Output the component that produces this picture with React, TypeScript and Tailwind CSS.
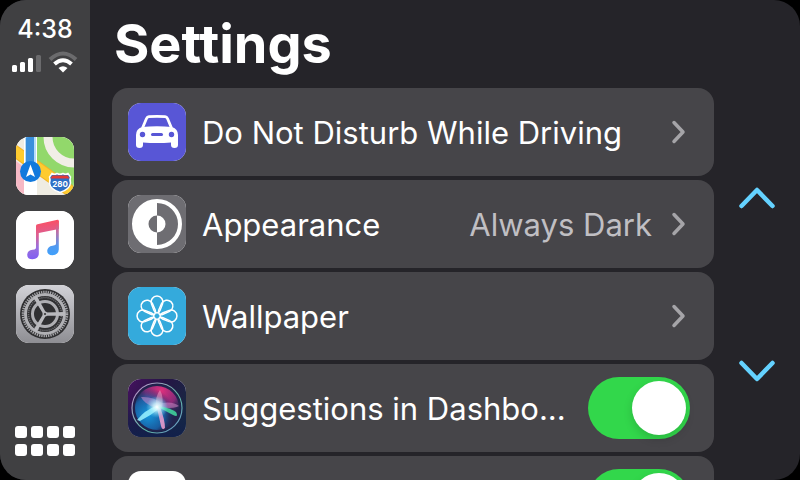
import type { ReactNode } from "react";

const SPOKES = [0, 45, 90, 135, 180, 225, 270, 315];

function MapsIcon() {
  return (
    <svg viewBox="0 0 58 58" className="size-full" aria-hidden="true">
      <rect width="58" height="58" fill="#efece2" />
      <path d="M20 0H58V56L20 28Z" fill="#92d86b" />
      <circle cx="58" cy="0" r="26" fill="none" stroke="#f1eee6" strokeWidth="9" />
      <path d="M0 24L9 31V58H0Z" fill="#f6b9c5" />
      <path d="M-4 12L64 61" stroke="#f3b326" strokeWidth="12" />
      <path d="M-4 12L64 61" stroke="#fecb2f" strokeWidth="10" />
      <rect x="8" width="13" height="58" fill="#fff" />
      <rect x="9" width="11" height="34" fill="#b8dcf8" />
      <rect x="10" width="8" height="34" fill="#3a8fdc" />
      <circle cx="14.5" cy="34.5" r="10.5" fill="#1279dd" />
      <path d="M14.5 27.5L19 40L14.5 37.5L10 40Z" fill="#fff" />
      <path
        d="M36 36.5Q38.5 38 41 36.5Q44 38 47 36.5Q49.5 38 52 36.5L54.5 40Q53.5 42 54.5 46Q54 52 44 55.5Q34 52 33.5 46Q34.5 42 33.5 40Z"
        fill="#2d6fc5"
        stroke="#fff"
        strokeWidth="1.5"
      />
      <path d="M35 40.5L36.5 38.5H51.5L53 40.5V41.5H35Z" fill="#e23b37" />
      <text x="44" y="50" textAnchor="middle" fontFamily="Inter, sans-serif" fontSize="8" fontWeight="700" fill="#fff">
        280
      </text>
    </svg>
  );
}

function MusicIcon() {
  return (
    <svg viewBox="0 0 58 58" className="size-full" aria-hidden="true">
      <defs>
        <linearGradient id="note" gradientUnits="userSpaceOnUse" x1="27" y1="10" x2="32" y2="48">
          <stop offset="0" stopColor="#fb4f63" />
          <stop offset="0.35" stopColor="#dc5f92" />
          <stop offset="0.65" stopColor="#9a70dd" />
          <stop offset="1" stopColor="#7d5cf5" />
        </linearGradient>
        <linearGradient id="noteRight" gradientUnits="userSpaceOnUse" x1="40" y1="10" x2="38" y2="44">
          <stop offset="0" stopColor="#fb4f63" />
          <stop offset="0.35" stopColor="#b573ae" />
          <stop offset="0.75" stopColor="#4f9af2" />
          <stop offset="1" stopColor="#3fa0fb" />
        </linearGradient>
      </defs>
      <rect width="58" height="58" fill="#fff" />
      <path
        d="M20 15Q20 13.5 21.5 13.2L41.5 8.8Q42.8 8.6 42.8 10V18L22.8 22V43Q22.5 48 16.5 48.3Q11.2 48.3 11.2 43.8Q11.5 39.5 16.5 38.8L18.5 38.4Q20 38 20 36.5Z"
        fill="url(#note)"
      />
      <path
        d="M42.8 10V38.5Q42.5 43.8 36.5 44.2Q31.2 44.2 31.2 39.8Q31.5 35.5 36.5 34.7L38.5 34.3Q40 34 40 32.5V10Z"
        fill="url(#noteRight)"
      />
    </svg>
  );
}

function GearIcon() {
  return (
    <svg viewBox="0 0 58 58" className="size-full" aria-hidden="true">
      <defs>
        <linearGradient id="metal" x1="0" y1="0" x2="0" y2="1">
          <stop offset="0" stopColor="#d2d2d7" />
          <stop offset="1" stopColor="#8e8e93" />
        </linearGradient>
      </defs>
      <rect width="58" height="58" fill="url(#metal)" />
      <circle cx="29" cy="29" r="25" fill="#2f2f31" />
      <circle cx="29" cy="29" r="22" fill="none" stroke="#a9a9ad" strokeWidth="2.5" strokeDasharray="1.3 1" />
      <circle cx="29" cy="29" r="19.5" fill="none" stroke="#b0b0b4" strokeWidth="3" />
      <circle cx="29" cy="29" r="16.5" fill="none" stroke="#6c6c70" strokeWidth="1.5" strokeDasharray="1.2 0.9" />
      <circle cx="29" cy="29" r="12.5" fill="none" stroke="#aeaeb2" strokeWidth="3" />
      <path d="M29 27.5L49 27V31L29 30.5ZM30.3 28.2L20.7 10.7L17.3 12.7L27.7 29.8ZM30.3 29.8L20.7 47.3L17.3 45.3L27.7 28.2Z" fill="#b9b9bd" />
      <circle cx="29" cy="29" r="2.5" fill="#b5b5b9" />
      <circle cx="29" cy="29" r="1" fill="#2f2f31" />
    </svg>
  );
}

function CarIcon() {
  return (
    <svg viewBox="0 0 58 58" className="size-full" aria-hidden="true">
      <rect width="58" height="58" fill="#5856d6" />
      <path d="M14.5 25L18.5 15.5Q19.3 13.8 21 13.6Q29 13 37 13.6Q38.7 13.8 39.5 15.5L43.5 25" fill="none" stroke="#fff" strokeWidth="2.8" />
      <path
        d="M14 24Q29 22.6 44 24Q50 26 50 32V42Q50 45 46.5 45Q43 45 43 42V39.5Q29 40.5 15 39.5V42Q15 45 11.5 45Q8 45 8 42V32Q8 26 14 24Z"
        fill="#fff"
      />
      <circle cx="14.5" cy="31.5" r="2.7" fill="#5856d6" />
      <circle cx="43.5" cy="31.5" r="2.7" fill="#5856d6" />
      <path d="M24.5 31.5H33.5" stroke="#5856d6" strokeWidth="3" strokeLinecap="round" />
    </svg>
  );
}

function AppearanceIcon() {
  return (
    <svg viewBox="0 0 58 58" className="size-full" aria-hidden="true">
      <rect width="58" height="58" fill="#6e6d72" />
      <circle cx="29" cy="29" r="23" fill="none" stroke="#fff" strokeWidth="4" />
      <path d="M29 5A24 24 0 0 0 29 53V37.5A8.5 8.5 0 0 1 29 20.5Z" fill="#fff" />
      <path d="M29 20.5A8.5 8.5 0 0 1 29 37.5Z" fill="#fff" />
    </svg>
  );
}

function WallpaperIcon() {
  return (
    <svg viewBox="0 0 58 58" className="size-full" aria-hidden="true">
      <rect width="58" height="58" fill="#34aadc" />
      {SPOKES.map((angle) => (
        <path
          key={angle}
          d="M29 26Q27 26 26 23.5L23.4 16.8A5.9 5.9 0 1 1 34.6 16.8L32 23.5Q31 26 29 26Z"
          transform={`rotate(${angle} 29 29)`}
          fill="none"
          stroke="#fff"
          strokeWidth="1.5"
          strokeLinejoin="round"
        />
      ))}
    </svg>
  );
}

function SiriIcon() {
  return (
    <svg viewBox="0 0 58 58" className="size-full" aria-hidden="true">
      <defs>
        <linearGradient id="siriBack" x1="0" y1="0" x2="1" y2="0.6">
          <stop offset="0" stopColor="#45125f" />
          <stop offset="0.5" stopColor="#251545" />
          <stop offset="1" stopColor="#172b43" />
        </linearGradient>
        <linearGradient id="siriBase" x1="0" y1="0" x2="0" y2="1">
          <stop offset="0.4" stopColor="#12204b" stopOpacity="0" />
          <stop offset="1" stopColor="#12204b" />
        </linearGradient>
        <radialGradient id="siriPink" cx="0.6" cy="0.1" r="0.6">
          <stop offset="0" stopColor="#e0307d" />
          <stop offset="0.6" stopColor="#a32c83" stopOpacity="0.8" />
          <stop offset="1" stopColor="#43316f" stopOpacity="0" />
        </radialGradient>
        <radialGradient id="siriBlue" cx="0.3" cy="0.65" r="0.6">
          <stop offset="0" stopColor="#159be0" />
          <stop offset="0.6" stopColor="#176bb5" stopOpacity="0.8" />
          <stop offset="1" stopColor="#1d2b61" stopOpacity="0" />
        </radialGradient>
        <linearGradient id="siriRim" x1="0" y1="0" x2="1" y2="1">
          <stop offset="0" stopColor="#c391cf" />
          <stop offset="0.6" stopColor="#5fb7a2" />
          <stop offset="1" stopColor="#6d8cc8" />
        </linearGradient>
        <radialGradient id="siriGlow">
          <stop offset="0" stopColor="#fff" />
          <stop offset="0.35" stopColor="#cbf9ff" stopOpacity="0.8" />
          <stop offset="1" stopColor="#6be2ff" stopOpacity="0" />
        </radialGradient>
      </defs>
      <rect width="58" height="58" fill="url(#siriBack)" />
      <rect width="58" height="58" fill="url(#siriBase)" />
      <circle cx="29" cy="29" r="24" fill="#21244d" />
      <circle cx="29" cy="29" r="22" fill="url(#siriPink)" />
      <circle cx="29" cy="29" r="22" fill="url(#siriBlue)" />
      <path d="M28 29Q16 25 13 18Q24 17 34 24Q45 22 51 27Q46 30 28 29Z" fill="#d98fd0" opacity="0.5" />
      <path d="M28 29Q27 17 32 11Q36 18 34 29Z" fill="#f09cc5" opacity="0.55" />
      <path d="M28 27Q17 31 9 41L12 42Q22 37 32 29Z" fill="#9bf3ff" opacity="0.85" />
      <path d="M29 29L33 47Q34 52 37 49Q37 41 32 28Z" fill="#f5a0cf" opacity="0.85" />
      <path d="M30 28L45 36Q51 39 48 33Q43 29 30 27Z" fill="#42dba0" opacity="0.85" />
      <circle cx="29" cy="28" r="11" fill="url(#siriGlow)" />
      <circle cx="29" cy="29" r="25" fill="none" stroke="url(#siriRim)" strokeWidth="1.2" />
    </svg>
  );
}

function SignalIcon() {
  return (
    <svg viewBox="0 0 30 20" className="h-5 w-[30px]" aria-hidden="true">
      <rect x="0" y="12" width="5" height="7" rx="1.5" fill="#fff" />
      <rect x="8" y="9" width="5" height="10" rx="1.5" fill="#fff" />
      <rect x="16" y="5" width="5" height="14" rx="1.5" fill="#fff" />
      <rect x="24" y="2" width="5" height="17" rx="1.5" fill="#6b6b6d" />
    </svg>
  );
}

function WifiIcon() {
  return (
    <svg viewBox="0 0 30 22" className="h-[22px] w-[30px]" fill="none" aria-hidden="true">
      <path d="M2 8.5Q15 -3.5 28 8.5" stroke="#6b6b6d" strokeWidth="4" />
      <path d="M6.5 13Q15 5.5 23.5 13" stroke="#fff" strokeWidth="4" />
      <path d="M10.5 17Q15 13.5 19.5 17L15 21.5Z" fill="#fff" />
    </svg>
  );
}

function Disclosure() {
  return (
    <svg viewBox="0 0 16 26" className="mr-1 h-[26px] w-4 shrink-0" fill="none" aria-hidden="true">
      <path d="M4 3.5L13 13L4 22.5" stroke="#a5a4a8" strokeWidth="3.5" strokeLinecap="round" strokeLinejoin="round" />
    </svg>
  );
}

function Tile({ children }: { children?: ReactNode }) {
  return <span className="size-[58px] shrink-0 overflow-hidden rounded-[13px] bg-white">{children}</span>;
}

const ROW = "flex h-[88px] w-full shrink-0 items-center rounded-2xl bg-[#464549] pr-6 pl-4 text-left";

type LinkRowProps = { icon: ReactNode; title: string; value?: string };

function LinkRow({ icon, title, value }: LinkRowProps) {
  return (
    <button type="button" className={ROW}>
      <Tile>{icon}</Tile>
      <span className="ml-4 min-w-0 flex-1 truncate pt-0.5">{title}</span>
      {value && <span className="mr-[18px] shrink-0 pt-0.5 text-[#c0bfc3]">{value}</span>}
      <Disclosure />
    </button>
  );
}

type SwitchRowProps = { icon?: ReactNode; title?: string };

function SwitchRow({ icon, title }: SwitchRowProps) {
  return (
    <label className={ROW}>
      <Tile>{icon}</Tile>
      <span className="mr-4 ml-4 min-w-0 flex-1 truncate pt-0.5">{title}</span>
      <input
        type="checkbox"
        role="switch"
        defaultChecked
        aria-label={title ?? "More"}
        className="flex h-[62px] w-[102px] shrink-0 appearance-none items-center rounded-full bg-[#6e6d72] p-1 before:size-[54px] before:rounded-full before:bg-white before:shadow-[0_4px_10px_rgba(0,0,0,0.15)] checked:justify-end checked:bg-[#32d74b]"
      />
    </label>
  );
}

const APPS = [
  { name: "Maps", icon: <MapsIcon /> },
  { name: "Music", icon: <MusicIcon /> },
  { name: "Settings", icon: <GearIcon /> },
];

export default function App() {
  return (
    <div className="h-screen bg-black font-['Inter','Liberation_Sans',sans-serif] text-white">
      <div className="flex h-full overflow-hidden rounded-[26px] bg-[#252429]">
        <aside className="flex w-[90px] shrink-0 flex-col items-center bg-[#404042] pt-4 pb-6">
          <time className="text-[25px] leading-[26px] font-medium">4:38</time>
          <div className="mt-[9px] flex items-end gap-1.5">
            <SignalIcon />
            <WifiIcon />
          </div>
          <nav className="mt-16 flex flex-col gap-4">
            {APPS.map((app) => (
              <button key={app.name} type="button" aria-label={app.name} className="flex">
                <Tile>{app.icon}</Tile>
              </button>
            ))}
          </nav>
          <button type="button" aria-label="Home" className="mt-auto grid grid-cols-4 gap-x-1 gap-y-1.5">
            {SPOKES.map((dot) => (
              <span key={dot} className="size-3 rounded-[3px] bg-white" />
            ))}
          </button>
        </aside>

        <main className="flex min-w-0 flex-1 flex-col pl-[22px]">
          <h1 className="flex h-[88px] shrink-0 items-center pl-0.5 text-[54px] leading-none font-bold">Settings</h1>
          <div className="flex min-h-0 flex-1">
            <section className="flex min-w-0 flex-1 flex-col gap-1 overflow-hidden text-[31px] leading-10">
              <LinkRow icon={<CarIcon />} title="Do Not Disturb While Driving" />
              <LinkRow icon={<AppearanceIcon />} title="Appearance" value="Always Dark" />
              <LinkRow icon={<WallpaperIcon />} title="Wallpaper" />
              <SwitchRow icon={<SiriIcon />} title="Suggestions in Dashbo..." />
              <SwitchRow />
            </section>
            <div className="flex w-[86px] shrink-0 flex-col items-center justify-between pt-[98px] pb-[97px]">
              <button type="button" aria-label="Scroll up">
                <svg viewBox="0 0 36 24" className="h-6 w-9" fill="none" aria-hidden="true">
                  <path d="M2.5 20L18 4L33.5 20" stroke="#64d2ff" strokeWidth="4.5" strokeLinecap="round" strokeLinejoin="round" />
                </svg>
              </button>
              <button type="button" aria-label="Scroll down">
                <svg viewBox="0 0 36 24" className="h-6 w-9" fill="none" aria-hidden="true">
                  <path d="M2.5 4L18 20L33.5 4" stroke="#64d2ff" strokeWidth="4.5" strokeLinecap="round" strokeLinejoin="round" />
                </svg>
              </button>
            </div>
          </div>
        </main>
      </div>
    </div>
  );
}
